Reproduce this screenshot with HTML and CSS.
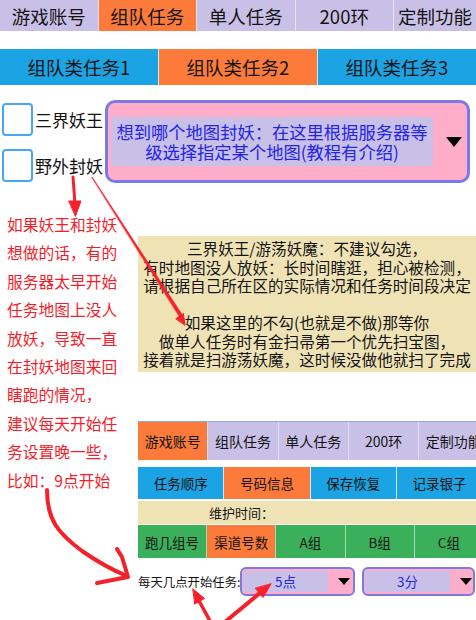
FILE: index.html
```html
<!DOCTYPE html>
<html lang="zh-CN">
<head>
<meta charset="utf-8">
<title>组队任务</title>
<link rel="stylesheet" href="styles.css">
</head>
<body>
<div class="page">
  <nav class="tabs tabs-top">
    <div class="tab lav">游戏账号</div>
    <div class="tab orange">组队任务</div>
    <div class="tab lav">单人任务</div>
    <div class="tab lav">200环</div>
    <div class="tab lav">定制功能</div>
  </nav>
  <nav class="tabs tabs-sub">
    <div class="tab blue">组队类任务1</div>
    <div class="tab orange">组队类任务2</div>
    <div class="tab blue">组队类任务3</div>
  </nav>

  <section class="options">
    <div class="checks">
      <label class="check"><span class="box"></span>三界妖王</label>
      <label class="check"><span class="box"></span>野外封妖</label>
    </div>
    <div class="select select-big">
      <div class="select-text">想到哪个地图封妖：在这里根据服务器等<br>级选择指定某个地图(教程有介绍)</div>
      <span class="caret"></span>
    </div>
  </section>

  <section class="main">
    <div class="note">如果妖王和封妖<br>想做的话，有的<br>服务器太早开始<br>任务地图上没人<br>放妖，导致一直<br>在封妖地图来回<br>瞎跑的情况，<br>建议每天开始任<br>务设置晚一些，<br>比如：9点开始</div>
    <div class="right">
      <div class="info">三界妖王/游荡妖魔：不建议勾选，<br>有时地图没人放妖：长时间瞎逛，担心被检测，<br>请根据自己所在区的实际情况和任务时间段决定<br><br>如果这里的不勾(也就是不做)那等你<br>做单人任务时有金扫帚第一个优先扫宝图，<br>接着就是扫游荡妖魔，这时候没做他就扫了完成</div>

      <div class="panel">
        <div class="prow prow1">
          <div class="tab orange">游戏账号</div>
          <div class="tab lav">组队任务</div>
          <div class="tab lav">单人任务</div>
          <div class="tab lav">200环</div>
          <div class="tab lav">定制功能</div>
        </div>
        <div class="prow prow2">
          <div class="tab blue">任务顺序</div>
          <div class="tab orange">号码信息</div>
          <div class="tab blue">保存恢复</div>
          <div class="tab blue">记录银子</div>
        </div>
        <div class="prow3">维护时间：</div>
        <div class="prow prow4">
          <div class="tab green">跑几组号</div>
          <div class="tab orange">渠道号数</div>
          <div class="tab green">A组</div>
          <div class="tab green">B组</div>
          <div class="tab green">C组</div>
        </div>
      </div>

      <div class="start-row">
        <span class="start-label">每天几点开始任务:</span>
        <div class="select select-small">
          <div class="select-value">5点</div>
          <span class="caret caret-small"></span>
        </div>
        <div class="select select-small select-last">
          <div class="select-value">3分</div>
          <span class="caret caret-small"></span>
        </div>
      </div>
    </div>
  </section>

  <svg class="arrows" width="476" height="620" viewBox="0 0 476 620">
    <g fill="#f5202a" stroke="#f5202a" stroke-linecap="round" stroke-linejoin="round">
      <path d="M73 177 L75 204" stroke-width="3" fill="none"/>
      <polygon points="69,201 81,201 75.5,216" stroke-width="1"/>
      <polygon points="91.5,177 92.3,177 182.5,315 179.5,317" stroke-width="0.4"/>
      <polygon points="185,325 183.4,313.6 176,318.6" stroke-width="1"/>
      <path d="M47 490 C47 520 58 533 82 551 C98 562 112 570 127 576" stroke-width="4" fill="none"/>
      <path d="M117 549 L122 557 L128 577 M97 583 L128 577" stroke-width="4" fill="none"/>
      <path d="M210 621 L198 599" stroke-width="3.5" fill="none"/>
      <polygon points="193,589 204.5,598.5 195,604" stroke-width="1"/>
      <path d="M226 621 L260 593" stroke-width="4" fill="none"/>
      <polygon points="271,584 263,597.5 255.5,588.5" stroke-width="1"/>
    </g>
  </svg>
</div>
</body>
</html>
```

FILE: styles.css
```css
* { box-sizing: border-box; }
html, body { margin: 0; padding: 0; background: #ffffff; }
body {
  font-family: "Noto Sans CJK SC", "Noto Sans", "DejaVu Sans", sans-serif;
  color: #141414;
}
.page {
  position: relative;
  width: 476px;
  height: 620px;
  overflow: hidden;
}

/* generic tabs */
.tabs, .prow { display: flex; }
.tab {
  display: flex;
  align-items: center;
  justify-content: center;
  white-space: nowrap;
  flex-shrink: 0;
  overflow: hidden;
}
.lav { background: #c8c0e6; }
.orange { background: #fd7b3a; }
.blue { background: #1ba3e3; }
.green { background: #3bb05a; }

.tabs-top {
  height: 31px;
  gap: 1px;
  background: #e6e2f4;
  font-size: 18.5px;
}
.tabs-top .tab { width: 97.5px; }
.tabs-top .tab:last-child { width: auto; flex: 1; }

.tabs-sub {
  margin-top: 18px;
  height: 36px;
  gap: 1px;
  background: #cdeaf8;
  font-size: 18.5px;
}
.tabs-sub .tab { flex: 1; }

/* options row */
.options {
  display: flex;
  margin-top: 15px;
  height: 83px;
}
.checks {
  width: 105px;
  padding: 3px 0 0 2px;
  display: flex;
  flex-direction: column;
  gap: 13px;
}
.check {
  display: flex;
  align-items: center;
  height: 33px;
  font-size: 17px;
  color: #111;
}
.box {
  width: 31px;
  height: 33px;
  border: 2px solid #45a7f6;
  border-radius: 4px;
  margin-right: 2px;
  background: #fff;
}

.select {
  display: flex;
  align-items: center;
  background: #ffadc8;
  border: 3px solid #7a7ae2;
}
.select-big {
  flex: 1;
  margin-right: 6px;
  border-radius: 10px;
  padding: 0 0 0 3px;
}
.select-text {
  width: 322px;
  background: #c8c0e6;
  color: #2424ea;
  font-size: 17.3px;
  line-height: 20px;
  padding: 4.5px 0;
  text-align: center;
  white-space: nowrap;
}
.caret {
  width: 0;
  height: 0;
  margin-left: 13px;
  border-left: 8px solid transparent;
  border-right: 8px solid transparent;
  border-top: 10px solid #000;
}

/* main area */
.main {
  display: flex;
  margin-top: 28px;
}
.note {
  width: 138px;
  flex-shrink: 0;
  padding-left: 7px;
  color: #f81c2a;
  font-size: 15.75px;
  line-height: 28.4px;
  white-space: nowrap;
}
.right {
  width: 338px;
  padding-top: 25px;
  overflow: hidden;
}
.info {
  height: 136px;
  background: #efe3b6;
  padding-top: 3px;
  font-size: 15.6px;
  line-height: 18.5px;
  text-align: center;
  white-space: nowrap;
  color: #141414;
}

.panel {
  margin-top: 49px;
  border-top: 1px solid #86a8ee;
}
.prow1 {
  height: 38px;
  gap: 1px;
  background: #e4e0f2;
  font-size: 14px;
}
.prow1 .tab { width: 69.3px; }
.prow2 {
  margin-top: 7px;
  height: 32px;
  gap: 1px;
  background: #cdeaf8;
  font-size: 13.5px;
}
.prow2 .tab { width: 85.3px; }
.prow3 {
  margin-top: 2px;
  height: 23px;
  line-height: 23px;
  background: #efe3b6;
  padding-left: 71px;
  font-size: 13px;
}
.prow4 {
  margin-top: 1px;
  height: 33px;
  gap: 1px;
  background: #a6dcb2;
  font-size: 13.5px;
}
.prow4 .tab { width: 68.2px; }

.start-row {
  display: flex;
  align-items: center;
  margin-top: 9px;
  height: 29px;
}
.start-label {
  width: 102px;
  flex-shrink: 0;
  font-size: 12.4px;
  white-space: nowrap;
  color: #141414;
}
.select-small {
  height: 29px;
  width: 115px;
  flex-shrink: 0;
  border-width: 2px;
  border-radius: 6px;
  padding-left: 1px;
}
.select-last {
  width: 113px;
  margin-left: 7px;
}
.select-value {
  width: 85px;
  height: 21px;
  line-height: 21px;
  background: #c8c0e6;
  color: #2424ea;
  font-size: 13.5px;
  text-align: center;
}
.caret-small {
  margin-left: 10px;
  border-left: 6px solid transparent;
  border-right: 6px solid transparent;
  border-top: 7px solid #000;
}

.arrows {
  position: absolute;
  left: 0;
  top: 0;
  pointer-events: none;
}
```
